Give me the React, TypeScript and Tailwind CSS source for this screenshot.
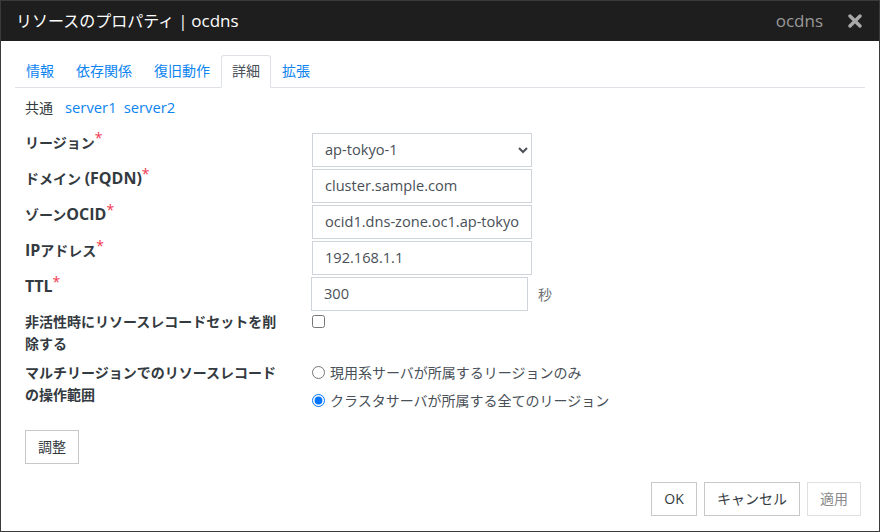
const font = '"Open Sans","Noto Sans CJK JP",sans-serif';

function Required() {
  return <span className="relative -top-[5px] text-[14px] leading-none font-normal text-[#f0384f]">*</span>;
}

function Latin({ children }: { children: React.ReactNode }) {
  return <span className="text-[16px] leading-none">{children}</span>;
}

function Row({ label, children }: { label: React.ReactNode; children: React.ReactNode }) {
  return (
    <div className="flex h-[34px] mb-[2px]">
      <label className="w-[287px] text-[14px] leading-[20px] font-bold text-[#333a40]">
        {label}
        <Required />
      </label>
      {children}
    </div>
  );
}

function TextBox({ value, className }: { value: string; className: string }) {
  return (
    <input
      readOnly
      value={value}
      className={`h-[34px] border border-[#ced4da] bg-white px-[12px] pb-[2px] text-[14.6px] text-[#495057] outline-none ${className}`}
    />
  );
}

function FooterButton({ label, disabled }: { label: string; disabled?: boolean }) {
  return (
    <button
      className={`h-[34px] min-w-[46px] border bg-white px-[12px] pb-[2px] text-[14px] ${
        disabled ? 'border-[#e0e0e0] text-[#8a8a8a]' : 'border-[#c8c8c8] text-[#333a40]'
      }`}
    >
      {label}
    </button>
  );
}

export default function App() {
  const tabs = ['情報', '依存関係', '復旧動作', '詳細', '拡張'];

  return (
    <div className="flex h-[532px] w-[880px] flex-col border border-[#3a3a3a] bg-white" style={{ fontFamily: font }}>
      <div className="flex h-[40px] shrink-0 items-center justify-between bg-[#1e1e1e] pl-[15px] pr-[17px]">
        <span className="text-[16px] text-white">
          リソースのプロパティ | <span className="text-[17px]">ocdns</span>
        </span>
        <div className="flex items-center gap-[25px]">
          <span className="text-[17px] text-[#999]">ocdns</span>
          <svg width="14" height="14" viewBox="0 0 14 14">
            <path d="M2 2 L12 12 M12 2 L2 12" stroke="#a8a8a8" strokeWidth="3.4" strokeLinecap="round" />
          </svg>
        </div>
      </div>

      <div className="flex flex-1 flex-col pl-[14px] pr-[14px]">
        <div className="mt-[14px] flex h-[33px] border-b border-[#dee2e6]">
          {tabs.map((tab) => (
            <div
              key={tab}
              className={
                tab === '詳細'
                  ? '-mb-px h-[33px] rounded-t-[3px] border border-b-white border-[#dee2e6] px-[10px] pt-[4px] text-[14px] text-[#495057]'
                  : 'px-[11px] pt-[5px] text-[14px] text-[#0d84f0]'
              }
            >
              {tab}
            </div>
          ))}
        </div>

        <div className="flex flex-1 flex-col pl-[10px]">
          <div className="mt-[9px] mb-[16px] flex h-[20px] items-center text-[14px]">
            <span className="mr-[12px] text-[#333a40]">共通</span>
            <span className="mr-[7px] text-[14.8px] text-[#0d84f0]">server1</span>
            <span className="text-[14.8px] text-[#0d84f0]">server2</span>
          </div>

          <Row label="リージョン">
            <select className="h-[34px] w-[220px] border border-[#ced4da] bg-white pb-[2px] pl-[8px] text-[14.6px] text-[#495057] outline-none">
              <option>ap-tokyo-1</option>
            </select>
          </Row>
          <Row label={<>ドメイン <Latin>(FQDN)</Latin></>}>
            <TextBox value="cluster.sample.com" className="w-[220px]" />
          </Row>
          <Row label={<>ゾーン<Latin>OCID</Latin></>}>
            <TextBox value="ocid1.dns-zone.oc1.ap-tokyo-1.aaaaaaaa" className="w-[220px]" />
          </Row>
          <Row label={<><Latin>IP</Latin>アドレス</>}>
            <TextBox value="192.168.1.1" className="w-[220px]" />
          </Row>
          <div className="flex h-[34px]">
            <label className="w-[286px] text-[14px] leading-[20px] font-bold text-[#333a40]">
              <Latin>TTL</Latin>
              <Required />
            </label>
            <div className="flex items-center">
              <TextBox value="300" className="w-[217px]" />
              <span className="ml-[10px] text-[14px] text-[#6b7075]">秒</span>
            </div>
          </div>

          <div className="mb-[7px] flex">
            <div className="w-[287px] pr-[24px] text-[14px] leading-[22px] font-bold text-[#333a40]">
              非活性時にリソースレコードセットを削除する
            </div>
            <input type="checkbox" readOnly className="mt-[4px] h-[13px] w-[13px]" />
          </div>

          <div className="flex">
            <div className="w-[287px] pr-[32px] text-[14px] leading-[22px] font-bold text-[#333a40]">
              マルチリージョンでのリソースレコードの操作範囲
            </div>
            <div className="-mt-px flex flex-col gap-[6px] text-[14px] text-[#495057]">
              <label className="flex h-[22px] items-center gap-[5px]">
                <input type="radio" name="scope" readOnly className="h-[13px] w-[13px]" />
                現用系サーバが所属するリージョンのみ
              </label>
              <label className="flex h-[22px] items-center gap-[5px]">
                <input type="radio" name="scope" readOnly defaultChecked className="h-[13px] w-[13px]" />
                クラスタサーバが所属する全てのリージョン
              </label>
            </div>
          </div>

          <button className="mt-[19px] h-[34px] w-[54px] border border-[#c8c8c8] bg-white pb-[2px] text-[14px] text-[#333a40]">
            調整
          </button>

          <div className="mt-[18px] flex justify-end gap-[7px] pr-[4px]">
            <FooterButton label="OK" />
            <FooterButton label="キャンセル" />
            <FooterButton label="適用" disabled />
          </div>
        </div>
      </div>
    </div>
  );
}
